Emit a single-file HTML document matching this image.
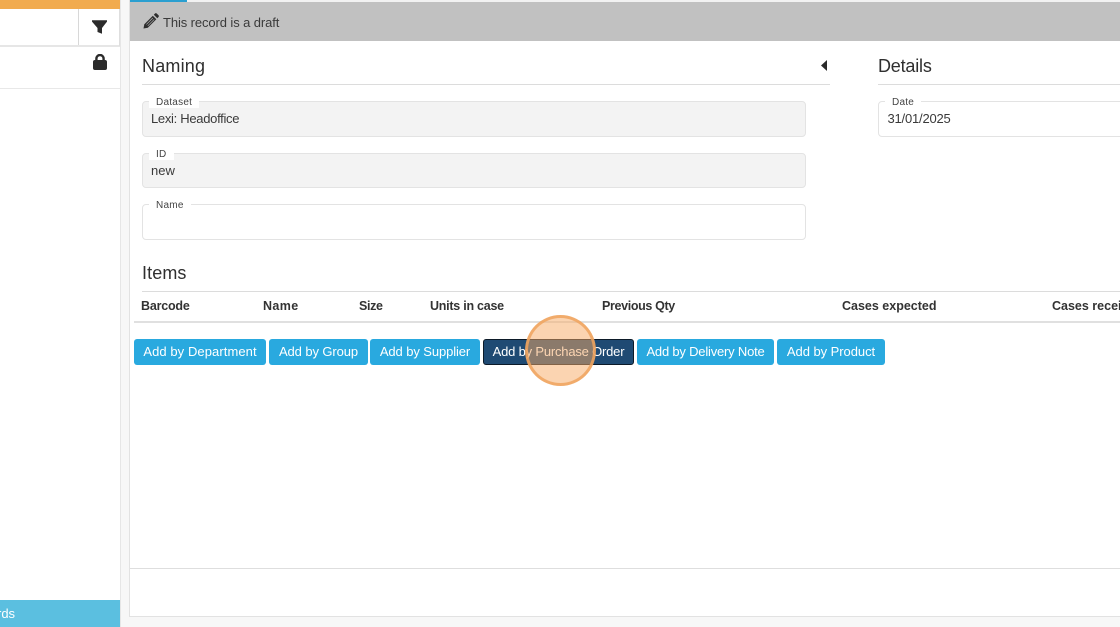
<!DOCTYPE html>
<html><head><meta charset="utf-8">
<style>
html,body{margin:0;padding:0}
body{width:1120px;height:627px;overflow:hidden;background:#f7f7f7;position:relative;font-family:"Liberation Sans",sans-serif;color:#333}
.a{position:absolute}
.t{position:absolute;white-space:nowrap;line-height:1}
.f{position:absolute;box-sizing:border-box;border:1px solid #e3e3e3;border-radius:4px}
.g{background:#f3f3f3}
.l{position:absolute;left:8px;top:-5px;background:#fff;padding:0 6px;height:11px;font-size:10px;line-height:11px;color:#444;white-space:nowrap;letter-spacing:.25px}
.b{position:absolute;top:339px;height:26px;box-sizing:border-box;background:#29a9df;border-radius:3px;color:#fff;font-size:13px;line-height:26px;text-align:center;white-space:nowrap}
.h{position:absolute;top:300px;font-size:12.5px;line-height:13px;font-weight:bold;color:#333;white-space:nowrap}
.s{position:absolute;font-size:18px;line-height:20px;color:#2f2f2f;white-space:nowrap}
</style></head>
<body>
<!-- left panel -->
<div class="a" style="left:0;top:0;width:121px;height:627px;background:#fff;border-right:1px solid #e6e6e6;box-sizing:border-box"></div>
<div class="a" style="left:0;top:0;width:120px;height:9px;background:#f1ab4f"></div>
<div class="a" style="left:0;top:45px;width:120px;height:2px;background:#e6e6e6"></div>
<div class="a" style="left:78px;top:9px;width:1px;height:36px;background:#d8d8d8"></div>
<div class="a" style="left:119px;top:9px;width:1px;height:37px;background:#dedede"></div>
<div class="a" style="left:0;top:88px;width:120px;height:1px;background:#e8e8e8"></div>
<svg class="a" style="left:92px;top:20px" width="15" height="14" viewBox="0 0 15 14"><path d="M0 .3H15V1.6L10 8V13.7L5.5 12V8L0 1.6Z" fill="#2b2b2b"/></svg>
<svg class="a" style="left:93px;top:54px" width="14" height="16" viewBox="0 0 14 16"><path d="M3.4 7V4.6a3.6 3.6 0 0 1 7.2 0V7" fill="none" stroke="#2b2b2b" stroke-width="2.4"/><rect x="0" y="6" width="14" height="10" rx="2" fill="#2b2b2b"/></svg>
<div class="a" style="left:0;top:600px;width:120px;height:27px;background:#5bbfe0"></div>
<div class="t" style="left:-3px;top:607px;font-size:13px;color:#fff">rds</div>

<!-- main panel -->
<div class="a" style="left:129px;top:0;width:991px;height:617px;background:#fff;border-left:1px solid #e2e2e2;border-bottom:1px solid #e2e2e2;box-sizing:border-box"></div>
<div class="a" style="left:130px;top:0;width:57px;height:2px;background:#2a9fd0"></div>
<div class="a" style="left:187px;top:0;width:933px;height:2px;background:#f2f2f2"></div>
<div class="a" style="left:130px;top:2px;width:990px;height:39px;background:#c1c1c1"></div>
<svg class="a" style="left:143px;top:13px" width="16" height="16" viewBox="0 0 16 16"><path d="M0.5 15.5L1.3 11.2L9.8 2.7L13.3 6.2L4.8 14.7Z" fill="#2e2e2e"/><path d="M10.8 1.7L12 .5C12.5 0 13.2 0 13.7 .5L15.5 2.3C16 2.8 16 3.5 15.5 4L14.3 5.2Z" fill="#2e2e2e"/><path d="M3.4 11.4L9.8 5M4.8 12.8L11.2 6.4" stroke="#c1c1c1" stroke-width=".6"/></svg>
<div class="t" style="left:163px;top:16px;font-size:13px;color:#3a3a3a;letter-spacing:-.1px">This record is a draft</div>

<div class="s" style="left:142px;top:56px;letter-spacing:.2px">Naming</div>
<div class="a" style="left:142px;top:84px;width:688px;height:1px;background:#dcdcdc"></div>
<svg class="a" style="left:820px;top:60px" width="8" height="11" viewBox="0 0 8 11"><path d="M7 0V11L1 5.5Z" fill="#2b2b2b"/></svg>
<div class="s" style="left:878px;top:56px;letter-spacing:-.2px">Details</div>
<div class="a" style="left:878px;top:84px;width:242px;height:1px;background:#dcdcdc"></div>

<div class="f g" style="left:142px;top:101px;width:664px;height:36px"><div class="l" style="left:6px;padding:0 7px">Dataset</div><div class="t" style="left:8px;top:10px;font-size:13px;letter-spacing:-.3px;color:#3a3a3a">Lexi: Headoffice</div></div>
<div class="f g" style="left:142px;top:153px;width:664px;height:35px"><div class="l" style="left:6px;padding:0 7px">ID</div><div class="t" style="left:8px;top:10px;font-size:13px;color:#3a3a3a">new</div></div>
<div class="f" style="left:142px;top:204px;width:664px;height:36px"><div class="l" style="left:6px;padding:0 7px">Name</div></div>
<div class="f" style="left:878px;top:101px;width:260px;height:36px"><div class="l" style="left:6px;padding:0 7px">Date</div><div class="t" style="left:8.5px;top:10px;font-size:13px;letter-spacing:-.2px;color:#3a3a3a">31/01/2025</div></div>

<div class="s" style="left:142px;top:263px;letter-spacing:.1px">Items</div>
<div class="a" style="left:142px;top:291px;width:978px;height:1px;background:#dcdcdc"></div>
<div class="h" style="left:141px;letter-spacing:-.2px">Barcode</div>
<div class="h" style="left:263px;letter-spacing:.4px">Name</div>
<div class="h" style="left:359px;letter-spacing:-.35px">Size</div>
<div class="h" style="left:430px;letter-spacing:-.25px">Units in case</div>
<div class="h" style="left:602px;letter-spacing:-.35px">Previous Qty</div>
<div class="h" style="left:842px">Cases expected</div>
<div class="h" style="left:1052px">Cases recei</div>
<div class="a" style="left:134px;top:321px;width:986px;height:2px;background:#e0e0e0"></div>

<div class="b" style="left:134px;width:132px;letter-spacing:.08px">Add by Department</div>
<div class="b" style="left:269px;width:99px;letter-spacing:-.1px">Add by Group</div>
<div class="b" style="left:370px;width:110px;letter-spacing:-.1px">Add by Supplier</div>
<div class="b" style="left:483px;width:151px;background:#1f4a73;border:1px solid #0c1a28;line-height:24px;letter-spacing:-.2px">Add by Purchase Order</div>
<div class="b" style="left:637px;width:137px;letter-spacing:-.2px">Add by Delivery Note</div>
<div class="b" style="left:777px;width:108px;letter-spacing:-.05px">Add by Product</div>

<div class="a" style="left:525px;top:315px;width:71px;height:71px;box-sizing:border-box;border-radius:50%;background:rgba(248,170,100,.5);border:3px solid rgba(240,165,95,.85)"></div>

<div class="a" style="left:130px;top:568px;width:990px;height:1px;background:#dedede"></div>
</body></html>
